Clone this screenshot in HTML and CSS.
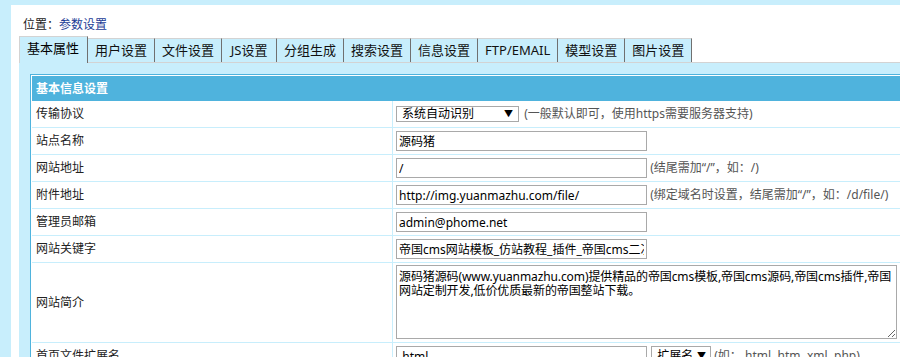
FILE: index.html
```html
<!DOCTYPE html>
<html lang="zh-CN">
<head>
    <meta charset="UTF-8">
    <meta name="viewport" content="width=device-width, initial-scale=1.0">
    <title>参数设置</title>
    <link rel="stylesheet" href="styles.css">
</head>
<body>
    <div class="page">
        <div class="position">位置：<a href="#">参数设置</a></div>
        <ul class="tabs">
            <li class="active">基本属性</li>
            <li>用户设置</li>
            <li>文件设置</li>
            <li>JS设置</li>
            <li>分组生成</li>
            <li>搜索设置</li>
            <li>信息设置</li>
            <li>FTP/EMAIL</li>
            <li>模型设置</li>
            <li>图片设置</li>
        </ul>
        <div class="tab-body">
            <table class="form-table">
                <tr>
                    <th colspan="2">基本信息设置</th>
                </tr>
                <tr>
                    <td class="label">传输协议</td>
                    <td>
                        <span class="select-box wide">
                            <select>
                                <option>系统自动识别</option>
                                <option>http</option>
                                <option>https</option>
                            </select>
                        </span>
                        <span class="hint">(一般默认即可，使用https需要服务器支持)</span>
                    </td>
                </tr>
                <tr>
                    <td class="label">站点名称</td>
                    <td><input type="text" value="源码猪"></td>
                </tr>
                <tr>
                    <td class="label">网站地址</td>
                    <td><input type="text" value="/"> <span class="hint">(结尾需加“/”，如：/)</span></td>
                </tr>
                <tr>
                    <td class="label">附件地址</td>
                    <td><input type="text" value="http://img.yuanmazhu.com/file/"> <span class="hint">(绑定域名时设置，结尾需加“/”，如：/d/file/)</span></td>
                </tr>
                <tr>
                    <td class="label">管理员邮箱</td>
                    <td><input type="text" value="admin@phome.net"></td>
                </tr>
                <tr>
                    <td class="label">网站关键字</td>
                    <td><input type="text" value="帝国cms网站模板_仿站教程_插件_帝国cms二次开发"></td>
                </tr>
                <tr>
                    <td class="label">网站简介</td>
                    <td class="area-cell"><textarea>源码猪源码(www.yuanmazhu.com)提供精品的帝国cms模板,帝国cms源码,帝国cms插件,帝国网站定制开发,低价优质最新的帝国整站下载。</textarea></td>
                </tr>
                <tr>
                    <td class="label">首页文件扩展名</td>
                    <td>
                        <input type="text" value=".html">
                        <span class="select-box small">
                            <select>
                                <option>扩展名</option>
                                <option>.html</option>
                                <option>.htm</option>
                            </select>
                        </span>
                        <span class="hint">(如：.html,.htm,.xml,.php)</span>
                    </td>
                </tr>
                <tr>
                    <td class="label">首页模式</td>
                    <td><input type="text" value=""></td>
                </tr>
            </table>
        </div>
    </div>
</body>
</html>
```

FILE: styles.css
```css
html, body {
    overflow: hidden;
}
body {
    margin: 0;
    background-color: #c8eefc;
    color: #222;
    font-family: "Noto Sans", "Noto Sans CJK SC", sans-serif;
    font-size: 12px;
}
.page {
    margin: 5px 0 0 11px;
    padding-left: 8px;
    background-color: #fff;
}
.position {
    padding: 12px 0 3px 4px;
    line-height: 16px;
}
.position a {
    color: #1b3c96;
    text-decoration: none;
}

/* tabs */
.tabs {
    list-style: none;
    margin: 0;
    padding: 0;
    height: 26px;
    display: flex;
    align-items: flex-end;
    border-bottom: 1px solid #d3d3d3;
}
.tabs li {
    flex: none;
    min-width: 40px;
    height: 23px;
    line-height: 23px;
    padding: 0 7px;
    border-top: 1px solid #d3d3d3;
    border-right: 1px solid #707070;
    background-color: #c8eefc;
    font-size: 13px;
    color: #111;
    text-align: center;
    white-space: nowrap;
}
.tabs li.active {
    height: 26px;
    line-height: 22px;
    padding: 0 8px 0 7px;
    margin-bottom: -1px;
    border-left: 1px solid #d3d3d3;
    color: #000;
}

/* form */
.tab-body {
    background-color: #c8eefc;
    padding: 11px 0 30px 11px;
}
.form-table {
    width: 1000px;
    border: 1px solid #4fb3dd;
    border-spacing: 0;
    padding: 1px;
    background-color: #fff;
}
.form-table th {
    height: 25px;
    line-height: 25px;
    padding: 0 4px;
    background-color: #4fb3dd;
    color: #fff;
    text-align: left;
    font-size: 12px;
}
.form-table td {
    padding: 3px 3px;
    line-height: 20px;
    border-bottom: 1px solid #c8eefc;
    vertical-align: middle;
    white-space: nowrap;
}
.form-table td.label {
    width: 352px;
    padding: 3px 4px;
    border-right: 1px solid #c8eefc;
    color: #222;
}
.form-table td.area-cell {
    padding: 2px 3px 3px;
}
input[type="text"] {
    box-sizing: border-box;
    width: 251px;
    height: 20px;
    margin: 0;
    padding: 0 2px;
    border: 1px solid #a9a9a9;
    font-family: "Noto Sans", "Noto Sans CJK SC", sans-serif;
    font-size: 12px;
    color: #000;
    vertical-align: top;
}
textarea {
    display: block;
    box-sizing: border-box;
    width: 501px;
    height: 74px;
    margin: 0;
    padding: 4px 0 2px 2px;
    border: 1px solid #a9a9a9;
    font-family: "Noto Sans", "Noto Sans CJK SC", sans-serif;
    font-size: 12px;
    line-height: 14px;
    letter-spacing: -0.1px;
    color: #000;
}
.select-box {
    position: relative;
    display: inline-block;
    vertical-align: top;
    margin-top: 2px;
}
.select-box select {
    -webkit-appearance: none;
    appearance: none;
    box-sizing: border-box;
    height: 16px;
    margin: 0;
    padding: 0 0 0 5px;
    border: 1px solid #a9a9a9;
    border-radius: 0;
    background-color: #fff;
    font-family: "Noto Sans", "Noto Sans CJK SC", sans-serif;
    font-size: 12px;
    line-height: 14px;
    color: #000;
    display: block;
}
.select-box::after {
    content: "▼";
    position: absolute;
    right: 6px;
    top: 0;
    font-size: 9px;
    line-height: 16px;
    color: #000;
    pointer-events: none;
}
.select-box.wide {
    margin-right: 2px;
}
.select-box.wide select {
    width: 123px;
}
.select-box.small {
    margin-top: 0;
    margin-left: 1px;
}
.select-box.small select {
    width: 60px;
    height: 20px;
    line-height: 18px;
}
.select-box.small::after {
    line-height: 20px;
    right: 5px;
}
.hint {
    color: #555;
}
```
